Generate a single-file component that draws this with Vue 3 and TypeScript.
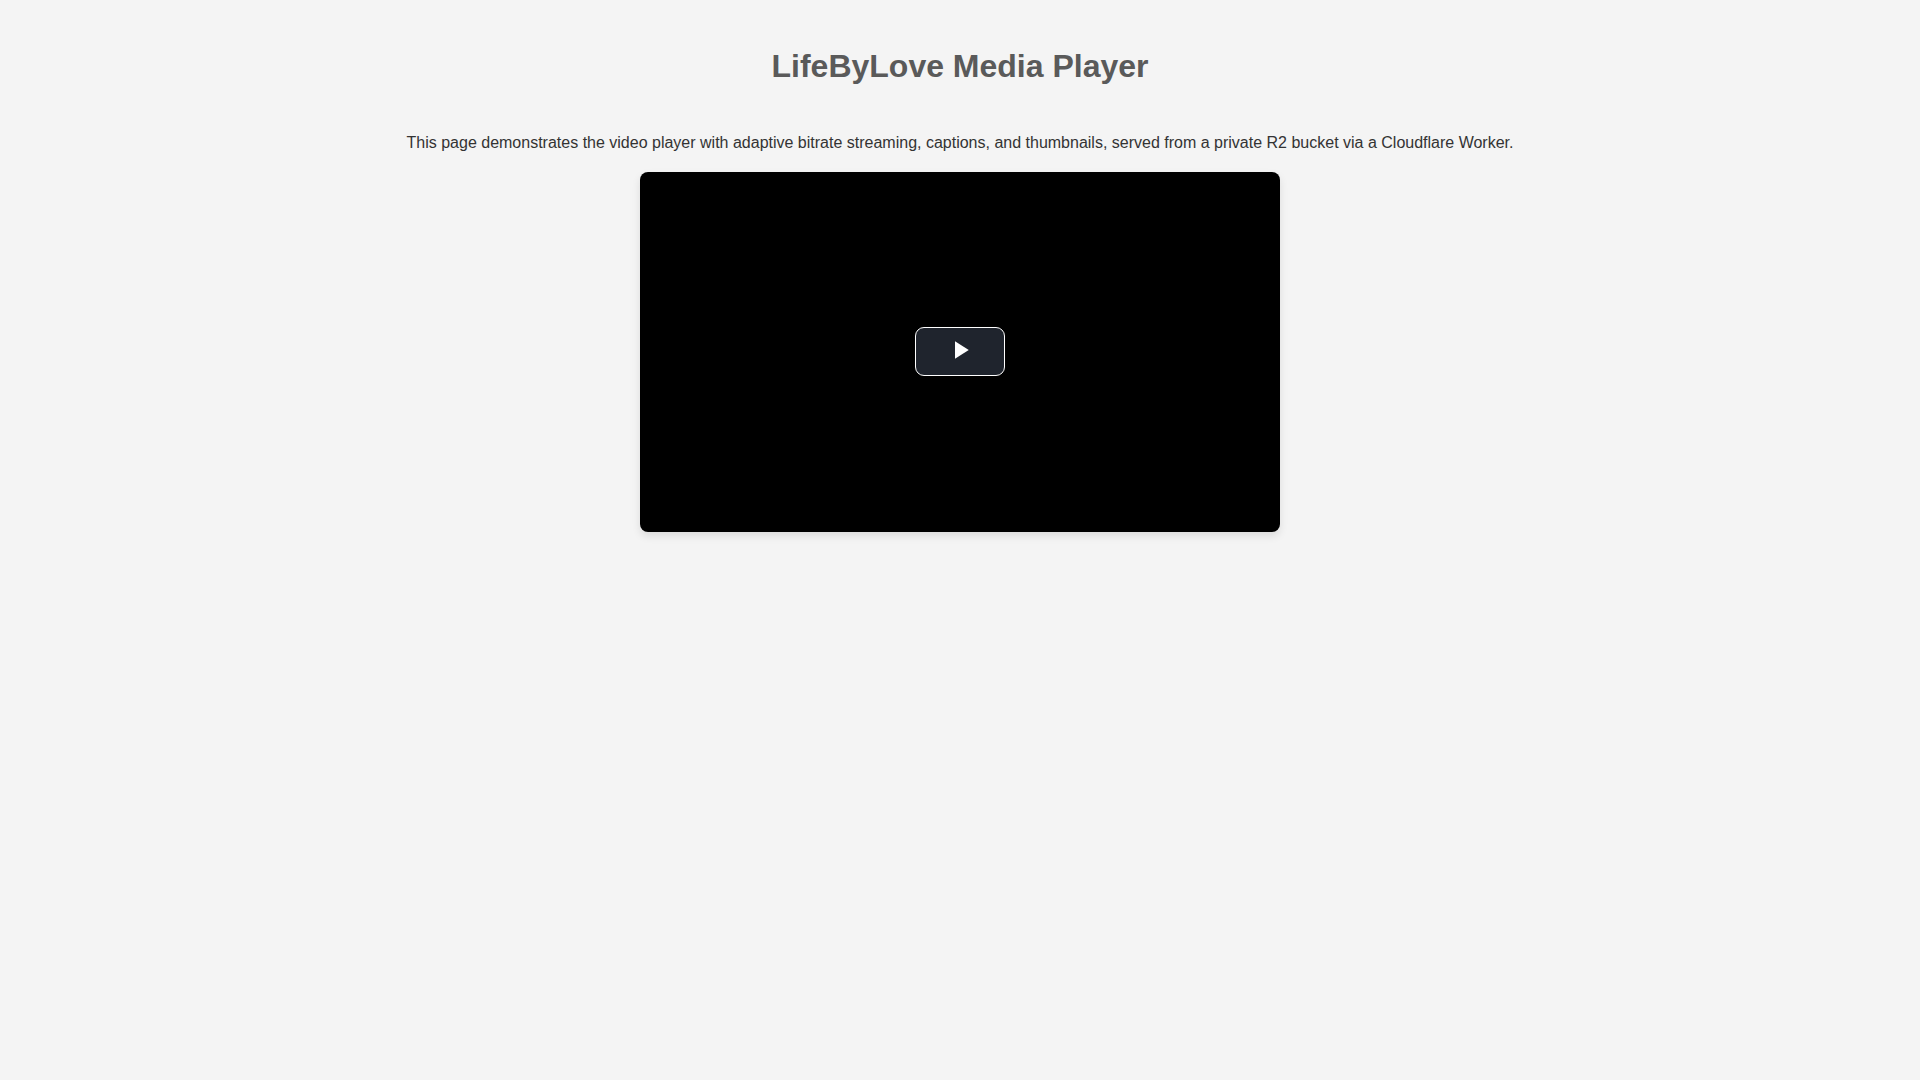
<script setup lang="ts">
import { ref } from 'vue'

const title = 'LifeByLove Media Player'
const playing = ref(false)
</script>

<template>
  <main class="page">
    <h1 class="title">{{ title }}</h1>
    <p class="intro">
      This page demonstrates the video player with adaptive bitrate streaming, captions, and
      thumbnails, served from a private R2 bucket via a Cloudflare Worker.
    </p>
    <section class="player" aria-label="Video Player">
      <button v-if="!playing" class="play" type="button" aria-label="Play Video" @click="playing = true">
        <svg class="play-icon" viewBox="0 0 48 48" aria-hidden="true">
          <path d="M16 10v28l22-14z" fill="#fff" />
        </svg>
      </button>
    </section>
  </main>
</template>

<style>
body {
  margin: 0;
  background: #f4f4f4;
}
</style>

<style scoped>
.page {
  display: flex;
  flex-direction: column;
  align-items: center;
  padding: 20px;
  font-family: Arial, "Liberation Sans", sans-serif;
  font-size: 16px;
  color: #333;
}
.title {
  margin: 28px 0 50px;
  font-size: 32px;
  line-height: 36px;
  color: #5a5a5a;
}
.intro {
  margin: 0 0 20px;
  line-height: 18px;
}
.player {
  display: flex;
  align-items: center;
  justify-content: center;
  box-sizing: border-box;
  width: 100%;
  max-width: 640px;
  aspect-ratio: 16 / 9;
  padding-bottom: 1px;
  border-radius: 8px;
  background: #000;
  box-shadow: 0 4px 8px rgba(0, 0, 0, 0.1);
}
.play {
  display: flex;
  align-items: center;
  justify-content: center;
  box-sizing: border-box;
  width: 90px;
  height: 49px;
  padding: 0 0 3px;
  border: 1px solid #fff;
  border-radius: 9px;
  background: #1f242d;
  cursor: pointer;
}
.play-icon {
  width: 30px;
  height: 30px;
}
</style>
